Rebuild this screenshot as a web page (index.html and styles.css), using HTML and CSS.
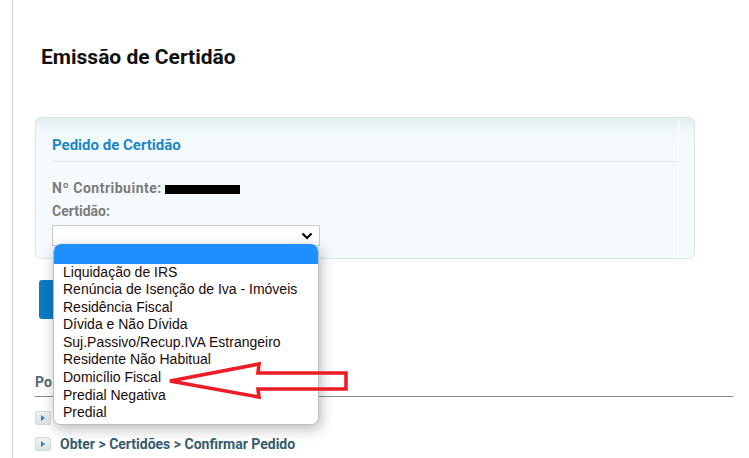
FILE: index.html
```html
<!DOCTYPE html>
<html lang="pt">
<head>
<meta charset="utf-8">
<title>Emissão de Certidão</title>
<link rel="stylesheet" href="styles.css">
</head>
<body>
<div class="page">
  <h1 class="title">Emissão de Certidão</h1>
  <div class="panel">
    <div class="panel-inner">
      <h2 class="panel-title">Pedido de Certidão</h2>
      <div class="field"><span class="label nif">Nº Contribuinte:</span> <span class="redact"></span></div>
      <div class="label cert">Certidão:</div>
      <div class="select-wrap">
        <div class="select">
          <svg class="chev" width="12" height="8" viewBox="0 0 12 8"><path d="M1.5 1.5 L6 6 L10.5 1.5" fill="none" stroke="#000" stroke-width="2.2"/></svg>
        </div>
        <ul class="dropdown">
          <li class="opt selected">&nbsp;</li>
          <li class="opt">Liquidação de IRS</li>
          <li class="opt">Renúncia de Isenção de Iva - Imóveis</li>
          <li class="opt">Residência Fiscal</li>
          <li class="opt">Dívida e Não Dívida</li>
          <li class="opt">Suj.Passivo/Recup.IVA Estrangeiro</li>
          <li class="opt">Residente Não Habitual</li>
          <li class="opt">Domicílio Fiscal</li>
          <li class="opt">Predial Negativa</li>
          <li class="opt">Predial</li>
        </ul>
      </div>
    </div>
  </div>
  <div class="actions"><button class="btn" aria-label="Pedir"></button></div>
  <div class="section">
    <div class="section-title">Po</div>
    <ul class="links">
      <li class="link"><span class="ico"></span></li>
      <li class="link"><span class="ico"></span><span class="link-text">Obter &gt; Certidões &gt; Confirmar Pedido</span></li>
    </ul>
  </div>
  <svg class="annot" width="190" height="44" viewBox="0 0 190 44">
    <polygon points="9,21 98,4 97,13 185,13 185,29 97,29 98,37" fill="none" stroke="#ee1c24" stroke-width="3.6" stroke-linejoin="miter"/>
  </svg>
</div>
</body>
</html>
```

FILE: styles.css
```css
* { box-sizing: border-box; }
html, body { margin: 0; padding: 0; background: #fff; }
body { font-family: Roboto, "Liberation Sans", Arial, sans-serif; }

.page {
  position: relative;
  margin-left: 12px;
  border-left: 1px solid #d4d4d4;
  min-height: 458px;
  padding: 44px 0 0 22px;
}

.title {
  margin: 0 0 0 6px;
  font-size: 21px;
  line-height: 26px;
  font-weight: 700;
  color: #111;
}

.panel {
  margin-top: 47px;
  width: 660px;
  height: 142px;
  border: 1px solid #d9e5e7;
  border-radius: 6px;
  background: linear-gradient(to bottom, #e3eef1 0px, #f1f8fa 14px, #f5fbfc 30px, #f5fbfc 100%);
  padding: 0 0 0 16px;
}

.panel-inner {
  width: 627px;
  height: 100%;
  border-right: 1px solid #ffffff;
  padding-top: 18px;
}

.panel-title {
  margin: 0;
  font-size: 15px;
  line-height: 19px;
  font-weight: 700;
  color: #1b86c8;
  padding-bottom: 6px;
  border-bottom: 1px solid #e1e9eb;
  width: 626px;
}

.field {
  margin-top: 17px;
  line-height: 18px;
  height: 18px;
}

.label {
  font-size: 14px;
  font-weight: 700;
  color: #7b7b7b;
  line-height: 18px;
}

.nif { letter-spacing: 0.5px; }

.cert { margin-top: 5px; }

.redact {
  display: inline-block;
  width: 75px;
  height: 9px;
  background: #000;
  vertical-align: -1px;
  margin-left: -1px;
}

.select-wrap {
  position: relative;
  margin-top: 5px;
  width: 268px;
}

.select {
  height: 21px;
  border: 1px solid #c8c8c8;
  background: #fff;
  display: flex;
  justify-content: flex-end;
  align-items: center;
  padding-right: 6px;
}

.chev { display: block; }

.dropdown {
  position: absolute;
  left: 1px;
  top: 19px;
  width: 266px;
  margin: 0;
  padding: 0 0 2px 0;
  list-style: none;
  background: #fff;
  border: 1px solid #bdbdbd;
  border-top: none;
  border-radius: 7px;
  box-shadow: 2px 4px 14px rgba(0, 0, 0, 0.28);
  z-index: 10;
  overflow: hidden;
}

.opt {
  height: 17.6px;
  line-height: 17.6px;
  padding-left: 9px;
  font-family: "Liberation Sans", Arial, sans-serif;
  font-size: 14px;
  color: #1a0a0a;
  white-space: nowrap;
}

.opt.selected {
  height: 19.5px;
  background: #1e8fff;
  border-radius: 7px 7px 0 0;
}

.actions {
  margin-top: 21px;
  padding-left: 4px;
}

.btn {
  display: block;
  width: 90px;
  height: 39px;
  border: none;
  border-radius: 3px;
  background: #0a7bc3;
}

.section {
  margin-top: 54px;
  width: 698px;
}

.section-title {
  font-size: 14px;
  font-weight: 700;
  color: #56696f;
  line-height: 18px;
  padding-bottom: 5px;
  border-bottom: 1px solid #7f8e90;
}

.links {
  list-style: none;
  margin: 0;
  padding: 8px 0 0 0;
}

.link {
  display: flex;
  align-items: center;
  gap: 9px;
  height: 26px;
}

.ico {
  position: relative;
  width: 16px;
  height: 14px;
  border: 1px solid #cfdadc;
  border-radius: 2px;
  background: linear-gradient(to bottom, #eef3f4, #d9e3e5);
}

.ico::after {
  content: "";
  position: absolute;
  left: 5px;
  top: 3px;
  border-left: 4px solid #2f86bf;
  border-top: 3.5px solid transparent;
  border-bottom: 3.5px solid transparent;
}

.link-text {
  font-size: 14px;
  font-weight: 700;
  color: #355c70;
  line-height: 18px;
}

.annot {
  position: absolute;
  left: 148px;
  top: 360px;
  z-index: 20;
}
```
